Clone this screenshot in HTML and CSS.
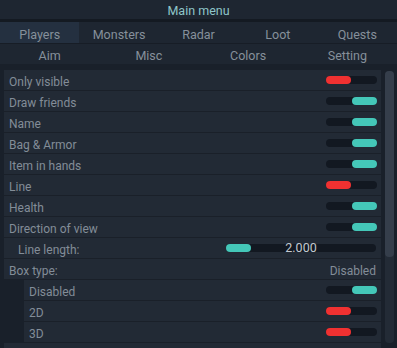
FILE: index.html
```html
<!DOCTYPE html>
<html lang="en">
<head>
    <meta charset="UTF-8">
    <title>Main menu</title>
    <link rel="stylesheet" href="styles.css">
</head>
<body>
    <div class="title">Main menu</div>
    <div class="tabs">
        <div class="tab-row five">
            <div class="tab active">Players</div>
            <div class="tab">Monsters</div>
            <div class="tab">Radar</div>
            <div class="tab">Loot</div>
            <div class="tab">Quests</div>
        </div>
        <div class="tab-row four">
            <div class="tab">Aim</div>
            <div class="tab">Misc</div>
            <div class="tab">Colors</div>
            <div class="tab">Setting</div>
        </div>
    </div>
    <div class="panel">
        <div class="list">
            <div class="row"><span>Only visible</span><div class="toggle off"><i></i></div></div>
            <div class="row"><span>Draw friends</span><div class="toggle on"><i></i></div></div>
            <div class="row"><span>Name</span><div class="toggle on"><i></i></div></div>
            <div class="row"><span>Bag &amp; Armor</span><div class="toggle on"><i></i></div></div>
            <div class="row"><span>Item in hands</span><div class="toggle on"><i></i></div></div>
            <div class="row"><span>Line</span><div class="toggle off"><i></i></div></div>
            <div class="row"><span>Health</span><div class="toggle on"><i></i></div></div>
            <div class="row"><span>Direction of view</span><div class="toggle on"><i></i></div></div>
            <div class="row slider-row">
                <span class="indent">Line length:</span>
                <div class="slider"><i style="width: 25px"></i><b>2.000</b></div>
            </div>
            <div class="row"><span>Box type:</span><span class="value">Disabled</span></div>
            <div class="row sub"><span>Disabled</span><div class="toggle on"><i></i></div></div>
            <div class="row sub"><span>2D</span><div class="toggle off"><i></i></div></div>
            <div class="row sub"><span>3D</span><div class="toggle off"><i></i></div></div>
            <div class="row"></div>
        </div>
        <div class="scrollbar"><div class="thumb"></div></div>
    </div>
</body>
</html>
```

FILE: styles.css
```css
body {
    margin: 0;
    height: 348px;
    overflow: hidden;
    background: #19202a;
    font-family: Roboto, "Liberation Sans", sans-serif;
    font-size: 12px;
    color: #838d98;
}
.title {
    height: 19px;
    line-height: 21px;
    text-align: center;
    background: #1e2631;
    color: #8ec5c9;
    font-size: 12.5px;
}
.tabs {
    border-top: 3px solid #141a22;
    background: #1e2631;
}
.tab-row {
    display: grid;
    height: 21px;
}
.tab-row.five {
    grid-template-columns: repeat(5, 1fr);
}
.tab-row.four {
    grid-template-columns: repeat(4, 1fr);
    height: 20px;
    border-top: 1px solid #171d26;
}
.tab {
    display: flex;
    align-items: center;
    justify-content: center;
    padding-top: 3px;
    color: #86909b;
    font-size: 12.5px;
}
.tab.active {
    background: #243040;
}
.panel {
    display: flex;
    margin-top: 6px;
    padding: 0 3px 0 4px;
}
.list {
    width: 377px;
}
.row {
    display: flex;
    align-items: center;
    justify-content: space-between;
    height: 20px;
    padding: 0 4px 0 5px;
    background: #222a35;
    border-bottom: 1px solid #1a2029;
}
.row > span {
    padding-top: 3px;
}
.row.sub {
    margin-left: 20px;
}
.indent {
    padding-left: 9px;
}
.value {
    padding-right: 1px;
}
.toggle {
    width: 51px;
    height: 8px;
    border-radius: 4px;
    background: #121821;
    display: flex;
}
.toggle i {
    width: 25px;
    height: 8px;
    border-radius: 4px;
}
.toggle.off i {
    background: #f03131;
}
.toggle.on {
    justify-content: flex-end;
}
.toggle.on i {
    background: #44c7b8;
}
.slider {
    position: relative;
    width: 150px;
    height: 8px;
    margin-right: 1px;
    border-radius: 4px;
    background: #121821;
}
.slider i {
    display: block;
    height: 8px;
    border-radius: 4px;
    background: #44c7b8;
}
.slider b {
    position: absolute;
    left: 0;
    right: 0;
    top: -4px;
    text-align: center;
    font-weight: normal;
    font-size: 12.5px;
    color: #c3c9cf;
}
.scrollbar {
    width: 9px;
    height: 272px;
    margin: 1px 0 0 4px;
    border-radius: 4px;
    background: #232b36;
}
.thumb {
    height: 186px;
    border-radius: 4px;
    background: #353e4b;
}
```
